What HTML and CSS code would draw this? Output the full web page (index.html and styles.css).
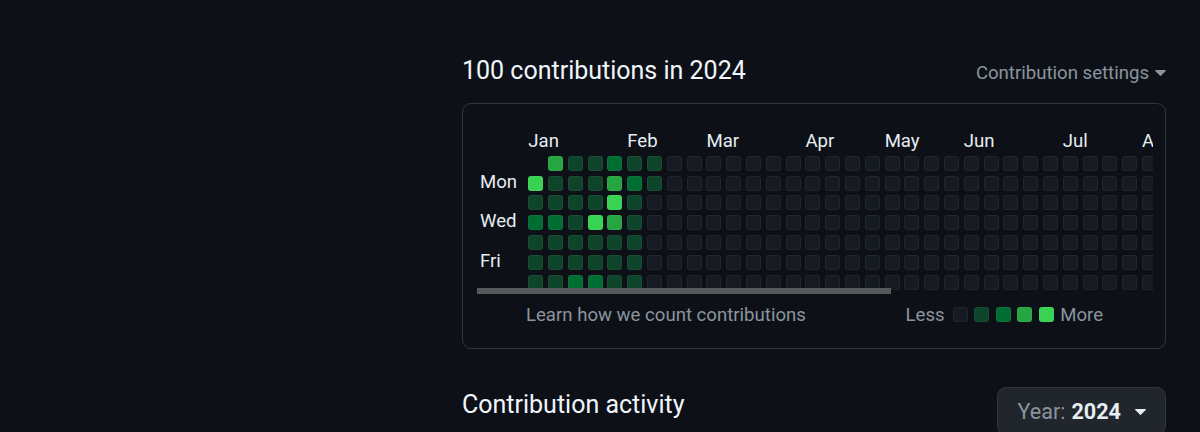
FILE: index.html
```html
<!DOCTYPE html>
<html lang="en">
<head>
<meta charset="utf-8">
<title>Contributions</title>
<link rel="stylesheet" href="styles.css">
</head>
<body>
<div class="page">
  <aside class="side"></aside>
  <main class="main">
    <div class="head">
      <h2 class="title">100 contributions in 2024</h2>
      <div class="settings">Contribution settings<svg class="caret" viewBox="0 0 11 6" width="11" height="6"><path d="M.7 0h9.6a.6.6 0 0 1 .42 1.02L5.92 5.72a.6.6 0 0 1-.84 0L.28 1.02A.6.6 0 0 1 .7 0Z"/></svg></div>
    </div>
    <section class="graph">
      <div class="scroll">
        <div class="cal">
          <div class="days">
            <span class="day d-mon">Mon</span>
            <span class="day d-wed">Wed</span>
            <span class="day d-fri">Fri</span>
          </div>
          <div class="weeks">
            <div class="months">
              <span class="month m-jan">Jan</span>
              <span class="month m-feb">Feb</span>
              <span class="month m-mar">Mar</span>
              <span class="month m-apr">Apr</span>
              <span class="month m-may">May</span>
              <span class="month m-jun">Jun</span>
              <span class="month m-jul">Jul</span>
              <span class="month m-aug">Aug</span>
            </div>
            <div class="cells">
              <i class="c none"></i><i class="c l4"></i><i class="c l1"></i><i class="c l2"></i><i class="c l1"></i><i class="c l1"></i><i class="c l1"></i>
              <i class="c l3"></i><i class="c l1"></i><i class="c l1"></i><i class="c l2"></i><i class="c l1"></i><i class="c l1"></i><i class="c l1"></i>
              <i class="c l1"></i><i class="c l1"></i><i class="c l1"></i><i class="c l1"></i><i class="c l1"></i><i class="c l1"></i><i class="c l2"></i>
              <i class="c l1"></i><i class="c l1"></i><i class="c l1"></i><i class="c l4"></i><i class="c l1"></i><i class="c l1"></i><i class="c l2"></i>
              <i class="c l2"></i><i class="c l3"></i><i class="c l4"></i><i class="c l3"></i><i class="c l1"></i><i class="c l1"></i><i class="c l1"></i>
              <i class="c l1"></i><i class="c l2"></i><i class="c l1"></i><i class="c l1"></i><i class="c l1"></i><i class="c l1"></i><i class="c l1"></i>
              <i class="c l1"></i><i class="c l1"></i><i class="c"></i><i class="c"></i><i class="c"></i><i class="c"></i><i class="c"></i>
              <i class="c"></i><i class="c"></i><i class="c"></i><i class="c"></i><i class="c"></i><i class="c"></i><i class="c"></i>
              <i class="c"></i><i class="c"></i><i class="c"></i><i class="c"></i><i class="c"></i><i class="c"></i><i class="c"></i>
              <i class="c"></i><i class="c"></i><i class="c"></i><i class="c"></i><i class="c"></i><i class="c"></i><i class="c"></i>
              <i class="c"></i><i class="c"></i><i class="c"></i><i class="c"></i><i class="c"></i><i class="c"></i><i class="c"></i>
              <i class="c"></i><i class="c"></i><i class="c"></i><i class="c"></i><i class="c"></i><i class="c"></i><i class="c"></i>
              <i class="c"></i><i class="c"></i><i class="c"></i><i class="c"></i><i class="c"></i><i class="c"></i><i class="c"></i>
              <i class="c"></i><i class="c"></i><i class="c"></i><i class="c"></i><i class="c"></i><i class="c"></i><i class="c"></i>
              <i class="c"></i><i class="c"></i><i class="c"></i><i class="c"></i><i class="c"></i><i class="c"></i><i class="c"></i>
              <i class="c"></i><i class="c"></i><i class="c"></i><i class="c"></i><i class="c"></i><i class="c"></i><i class="c"></i>
              <i class="c"></i><i class="c"></i><i class="c"></i><i class="c"></i><i class="c"></i><i class="c"></i><i class="c"></i>
              <i class="c"></i><i class="c"></i><i class="c"></i><i class="c"></i><i class="c"></i><i class="c"></i><i class="c"></i>
              <i class="c"></i><i class="c"></i><i class="c"></i><i class="c"></i><i class="c"></i><i class="c"></i><i class="c"></i>
              <i class="c"></i><i class="c"></i><i class="c"></i><i class="c"></i><i class="c"></i><i class="c"></i><i class="c"></i>
              <i class="c"></i><i class="c"></i><i class="c"></i><i class="c"></i><i class="c"></i><i class="c"></i><i class="c"></i>
              <i class="c"></i><i class="c"></i><i class="c"></i><i class="c"></i><i class="c"></i><i class="c"></i><i class="c"></i>
              <i class="c"></i><i class="c"></i><i class="c"></i><i class="c"></i><i class="c"></i><i class="c"></i><i class="c"></i>
              <i class="c"></i><i class="c"></i><i class="c"></i><i class="c"></i><i class="c"></i><i class="c"></i><i class="c"></i>
              <i class="c"></i><i class="c"></i><i class="c"></i><i class="c"></i><i class="c"></i><i class="c"></i><i class="c"></i>
              <i class="c"></i><i class="c"></i><i class="c"></i><i class="c"></i><i class="c"></i><i class="c"></i><i class="c"></i>
              <i class="c"></i><i class="c"></i><i class="c"></i><i class="c"></i><i class="c"></i><i class="c"></i><i class="c"></i>
              <i class="c"></i><i class="c"></i><i class="c"></i><i class="c"></i><i class="c"></i><i class="c"></i><i class="c"></i>
              <i class="c"></i><i class="c"></i><i class="c"></i><i class="c"></i><i class="c"></i><i class="c"></i><i class="c"></i>
              <i class="c"></i><i class="c"></i><i class="c"></i><i class="c"></i><i class="c"></i><i class="c"></i><i class="c"></i>
              <i class="c"></i><i class="c"></i><i class="c"></i><i class="c"></i><i class="c"></i><i class="c"></i><i class="c"></i>
              <i class="c"></i><i class="c"></i><i class="c"></i><i class="c"></i><i class="c"></i><i class="c"></i><i class="c"></i>
            </div>
          </div>
        </div>
        <div class="thumb"></div>
      </div>
      <div class="foot">
        <span class="learn">Learn how we count contributions</span>
        <div class="legend">
          <span class="less">Less</span>
          <i class="c"></i><i class="c l1"></i><i class="c l2"></i><i class="c l3"></i><i class="c l4"></i>
          <span class="more">More</span>
        </div>
      </div>
    </section>
    <div class="activity">
      <h2 class="title">Contribution activity</h2>
      <button class="year"><span class="year-label">Year:</span><b class="year-value">2024</b><svg class="caret caret-year" viewBox="0 0 11 6" width="11" height="6"><path d="M.7 0h9.6a.6.6 0 0 1 .42 1.02L5.92 5.72a.6.6 0 0 1-.84 0L.28 1.02A.6.6 0 0 1 .7 0Z"/></svg></button>
    </div>
  </main>
</div>
</body>
</html>
```

FILE: styles.css
```css
* { box-sizing: border-box; }

html, body {
  margin: 0;
  background: #0d1117;
}

body {
  font-family: Roboto, "Noto Sans", "Liberation Sans", sans-serif;
  color: #e6edf3;
  overflow: hidden;
}

.page {
  display: grid;
  grid-template-columns: 462px 704px;
  padding-top: 53px;
}

.head {
  display: flex;
  justify-content: space-between;
  align-items: baseline;
}

.title {
  margin: 0;
  font-size: 25px;
  line-height: 36px;
  font-weight: 400;
  color: #f0f6fc;
}

.settings {
  font-size: 18.6px;
  line-height: 27px;
  color: #8b949e;
}

.caret {
  fill: currentColor;
}

.settings .caret {
  margin-left: 6px;
  vertical-align: 3px;
}

.graph {
  margin-top: 14px;
  height: 246px;
  border: 1px solid #30363d;
  border-radius: 9px;
  padding: 27px 12px 0 14px;
}

.scroll {
  position: relative;
  overflow: hidden;
  padding-bottom: 4.4px;
}

.thumb {
  position: absolute;
  left: 0;
  bottom: 0;
  width: 414px;
  height: 6px;
  background: #56585c;
}

.cal {
  display: flex;
  gap: 4.8px;
}

.days {
  flex: 0 0 46.5px;
  display: grid;
  grid-template-rows: 20px repeat(7, 15px);
  row-gap: 4.8px;
  padding-left: 3px;
}

.day {
  font-size: 18.6px;
  line-height: 12px;
  align-self: start;
  white-space: nowrap;
}

.d-mon { grid-row: 3; }
.d-wed { grid-row: 5; }
.d-fri { grid-row: 7; }

.weeks {
  display: flex;
  flex-direction: column;
  gap: 4.8px;
}

.months {
  display: grid;
  grid-template-columns: repeat(32, 15px);
  column-gap: 4.8px;
  height: 20px;
}

.month {
  grid-row: 1;
  font-size: 18.6px;
  line-height: 20px;
  white-space: nowrap;
}

.m-jan { grid-column: 1; }
.m-feb { grid-column: 6; }
.m-mar { grid-column: 10; }
.m-apr { grid-column: 15; }
.m-may { grid-column: 19; }
.m-jun { grid-column: 23; }
.m-jul { grid-column: 28; }
.m-aug { grid-column: 32; }

.cells {
  display: grid;
  grid-template-rows: repeat(7, 15px);
  grid-auto-flow: column;
  grid-auto-columns: 15px;
  gap: 4.8px;
}

.c {
  display: block;
  width: 15px;
  height: 15px;
  border-radius: 3px;
  background: #161b22;
  box-shadow: inset 0 0 0 1px rgba(255, 255, 255, 0.05);
}

.c.none { visibility: hidden; }
.c.l1 { background: #0e4429; }
.c.l2 { background: #006d32; }
.c.l3 { background: #26a641; }
.c.l4 { background: #39d353; }

.foot {
  margin-top: 9px;
  display: flex;
  justify-content: space-between;
  align-items: center;
  padding: 0 50px 0 49px;
  font-size: 18.6px;
  line-height: 24px;
  color: #8b949e;
}

.legend {
  display: flex;
  align-items: center;
  gap: 6.5px;
}

.less { margin-right: 1.5px; }

.activity {
  margin-top: 38px;
  display: flex;
  justify-content: space-between;
  align-items: flex-start;
}

.year {
  display: flex;
  align-items: center;
  height: 48px;
  padding: 0 19px;
  background: #21262d;
  border: 1px solid #30363d;
  border-radius: 9px;
  font-family: Roboto, "Noto Sans", "Liberation Sans", sans-serif;
  font-size: 21.6px;
  color: #e6edf3;
}

.year-label {
  color: #8b949e;
  margin-right: 6px;
}

.year-value {
  font-weight: 700;
}

.caret-year {
  margin-left: 14px;
  margin-top: 1px;
}
```
